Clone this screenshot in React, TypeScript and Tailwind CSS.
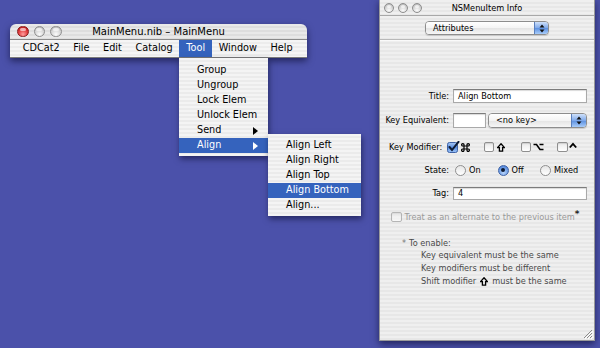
import React from "react";

function Light({ red, size }: { red?: boolean; size: "lg" | "sm" }) {
  const dim = size === "lg" ? "w-[11.5px] h-[11.5px]" : "w-[10px] h-[10px]";
  return (
    <div
      className={
        dim +
        " rounded-full relative shrink-0 " +
        (red
          ? "border border-[#8a1a1a] bg-[radial-gradient(circle_at_50%_80%,#ff9c9c_0%,#e03a3a_55%,#a81010_100%)]"
          : "border border-[#8e8e8e] bg-[radial-gradient(circle_at_50%_80%,#fbfbfb_0%,#d2d2d2_60%,#a9a9a9_100%)]")
      }
    >
      <div className="mx-auto mt-[1px] w-[60%] h-[35%] rounded-full bg-white/60" />
    </div>
  );
}

function UpDown() {
  return (
    <svg width="6" height="9" viewBox="0 0 6 9">
      <path d="M3 0.5 L5.5 3.5 L0.5 3.5 Z" fill="#111" />
      <path d="M3 8.5 L5.5 5.5 L0.5 5.5 Z" fill="#111" />
    </svg>
  );
}

function ShiftIcon() {
  return (
    <svg width="8" height="9" viewBox="0 0 8 9" className="shrink-0">
      <path
        d="M4 0.8 L7.4 4.6 L5.6 4.6 L5.6 8.2 L2.4 8.2 L2.4 4.6 L0.6 4.6 Z"
        fill="none"
        stroke="#000"
        strokeWidth="1.3"
        strokeLinejoin="miter"
      />
    </svg>
  );
}

function CtrlIcon() {
  return (
    <svg width="8" height="8" viewBox="0 0 8 8" className="shrink-0 -mt-[3px]">
      <path d="M0.8 5.5 L4 1.8 L7.2 5.5" fill="none" stroke="#000" strokeWidth="1.8" />
    </svg>
  );
}

function CmdIcon() {
  return (
    <svg width="9" height="9" viewBox="0 0 9 9" className="shrink-0">
      <path
        d="M3 3 L3 1.9 A1.2 1.2 0 1 0 1.9 3 L7.1 3 A1.2 1.2 0 1 0 6 1.9 L6 7.1 A1.2 1.2 0 1 0 7.1 6 L1.9 6 A1.2 1.2 0 1 0 3 7.1 Z"
        fill="none"
        stroke="#000"
        strokeWidth="1.2"
      />
    </svg>
  );
}

function OptIcon() {
  return (
    <svg width="11" height="8" viewBox="0 0 11 8" className="shrink-0">
      <path d="M0.5 1.5 L3.5 1.5 L7 6.5 L10.5 6.5 M6.5 1.5 L10.5 1.5" fill="none" stroke="#000" strokeWidth="1.6" />
    </svg>
  );
}

function Popup({ label, w, h, blueW }: { label: string; w: string; h: string; blueW: string }) {
  return (
    <div
      className={
        w +
        " " +
        h +
        " flex rounded-[4px] border border-[#8d8d8d] overflow-hidden shadow-[0_1px_1px_rgba(0,0,0,0.15)]"
      }
    >
      <div className="flex-1 flex items-center pl-[7px] bg-[linear-gradient(180deg,#ffffff_0%,#f4f4f4_50%,#e4e4e4_51%,#f6f6f6_100%)] text-black">
        {label}
      </div>
      <div
        className={
          blueW +
          " flex items-center justify-center border-l border-[#5a7fbd] bg-[linear-gradient(180deg,#cfe1fb_0%,#7fa9ea_50%,#5b8fe0_51%,#a9cdfa_100%)]"
        }
      >
        <UpDown />
      </div>
    </div>
  );
}

function Field({ value, w, h }: { value: string; w: string; h: string }) {
  return (
    <div
      className={
        w +
        " " +
        h +
        " bg-white border border-[#a9a9a9] border-t-[#7c7c7c] shadow-[inset_0_1px_1px_rgba(0,0,0,0.15)] flex items-center pl-[4px] text-black"
      }
    >
      {value}
    </div>
  );
}

function Box() {
  return (
    <div className="w-[10.5px] h-[10.5px] rounded-[2px] border border-[#8f8f8f] bg-[linear-gradient(180deg,#e9e9e9,#ffffff)] shadow-[inset_0_1px_1px_rgba(0,0,0,0.12)] shrink-0" />
  );
}

function CheckedBox() {
  return (
    <svg width="13" height="12" viewBox="0 0 13 12" className="shrink-0 -mt-[1px]">
      <defs>
        <linearGradient id="cbg" x1="0" y1="0" x2="0" y2="1">
          <stop offset="0" stopColor="#a9c8f5" />
          <stop offset="0.5" stopColor="#5b8fe0" />
          <stop offset="1" stopColor="#9cc4f8" />
        </linearGradient>
      </defs>
      <rect x="0.5" y="1.5" width="10" height="10" rx="2" fill="url(#cbg)" stroke="#3e62a6" />
      <path d="M2.5 6 L5 9 L11.5 0.8" fill="none" stroke="#0d1a33" strokeWidth="2" strokeLinecap="round" />
    </svg>
  );
}

function Radio({ on }: { on?: boolean }) {
  return on ? (
    <div className="w-[11px] h-[11px] rounded-full border border-[#3e62a6] bg-[radial-gradient(circle_at_50%_75%,#b6d3fb_0%,#6b9be4_60%,#3f74cf_100%)] flex items-center justify-center shrink-0">
      <div className="w-[4px] h-[4px] rounded-full bg-[#0d1a33]" />
    </div>
  ) : (
    <div className="w-[11px] h-[11px] rounded-full border border-[#8f8f8f] bg-[linear-gradient(180deg,#e6e6e6,#ffffff)] shrink-0" />
  );
}

function MenuItem({ label, active, arrow }: { label: string; active?: boolean; arrow?: boolean }) {
  return (
    <div
      className={
        "h-[15px] flex items-center justify-between pl-[18px] pr-[10px] " +
        (active ? "bg-[#3563bd] text-white" : "text-black")
      }
    >
      <span>{label}</span>
      {arrow && (
        <svg width="5" height="8" viewBox="0 0 5 8">
          <path d="M0 0 L5 4 L0 8 Z" fill={active ? "#ffffff" : "#000000"} />
        </svg>
      )}
    </div>
  );
}

export default function App() {
  return (
    <div className="relative w-[600px] h-[348px] overflow-hidden bg-[#4b51aa] font-['DejaVu_Sans',sans-serif]">
      {/* Main window */}
      <div className="absolute left-[10px] top-[24px] w-[297px] rounded-t-[6px] shadow-[0_3px_7px_rgba(0,0,30,0.55)]">
        <div className="h-[16px] rounded-t-[6px] grid grid-cols-[1fr_auto_1fr] items-center border-b border-[#8a8a8a] bg-[repeating-linear-gradient(180deg,#e9e9e9_0px,#e9e9e9_2px,#dedede_2px,#dedede_4px)]">
          <div className="flex items-center gap-[5px] pl-[7px]">
            <Light red size="lg" />
            <Light size="lg" />
            <Light size="lg" />
          </div>
          <div className="text-[10px] leading-none text-black">MainMenu.nib – MainMenu</div>
          <div />
        </div>
        <div className="h-[18px] flex items-stretch pl-[6px] text-[9.7px] text-black border-b border-[#7a7a7a] bg-[repeating-linear-gradient(180deg,#f5f5f5_0px,#f5f5f5_2px,#ececec_2px,#ececec_4px)]">
          {["CDCat2", "File", "Edit", "Catalog", "Tool", "Window", "Help"].map((m) => (
            <div
              key={m}
              className={
                "flex items-center px-[6.8px] " + (m === "Tool" ? "bg-[#3563bd] text-white" : "")
              }
            >
              {m}
            </div>
          ))}
        </div>
      </div>

      {/* Tool menu */}
      <div className="absolute left-[179px] top-[58px] w-[89px] pt-[5px] pb-[3px] text-[9.7px] bg-[repeating-linear-gradient(180deg,#f4f4f4_0px,#f4f4f4_2px,#ebebeb_2px,#ebebeb_4px)] shadow-[1px_3px_6px_rgba(0,0,30,0.5)]">
        <MenuItem label="Group" />
        <MenuItem label="Ungroup" />
        <MenuItem label="Lock Elem" />
        <MenuItem label="Unlock Elem" />
        <MenuItem label="Send" arrow />
        <MenuItem label="Align" arrow active />
      </div>

      {/* Align submenu */}
      <div className="absolute left-[268px] top-[134px] w-[93px] pt-[4px] pb-[3px] text-[9.7px] bg-[repeating-linear-gradient(180deg,#f4f4f4_0px,#f4f4f4_2px,#ebebeb_2px,#ebebeb_4px)] shadow-[1px_3px_6px_rgba(0,0,30,0.5)]">
        <MenuItem label="Align Left" />
        <MenuItem label="Align Right" />
        <MenuItem label="Align Top" />
        <MenuItem label="Align Bottom" active />
        <MenuItem label="Align..." />
      </div>

      {/* Info panel */}
      <div className="absolute left-[379px] top-[-1px] w-[216px] h-[342px] text-[8.2px] leading-none text-black border border-[#9a9a9a] bg-[repeating-linear-gradient(180deg,#efefef_0px,#efefef_2px,#e7e7e7_2px,#e7e7e7_4px)] shadow-[0_3px_7px_rgba(0,0,30,0.55)]">
        <div className="h-[16px] grid grid-cols-[1fr_auto_1fr] items-center border-b border-[#a8a8a8]">
          <div className="flex items-center gap-[4px] pl-[4px] pt-[1px]">
            <Light size="sm" />
            <Light size="sm" />
            <Light size="sm" />
          </div>
          <div className="pt-[1px]">NSMenuItem Info</div>
          <div />
        </div>
        <div className="flex justify-center pt-[5px]">
          <Popup label="Attributes" w="w-[124px]" h="h-[14px]" blueW="w-[14px]" />
        </div>
        <div className="mt-[4px] h-px bg-[#b8b8b8]" />
        <div className="h-px bg-[#fafafa]" />

        <div className="flex flex-col pt-[48px]">
          <div className="flex items-center h-[14px]">
            <div className="w-[69px] text-right">Title:</div>
            <div className="ml-[4px]">
              <Field value="Align Bottom" w="w-[134px]" h="h-[14px]" />
            </div>
          </div>

          <div className="flex items-center h-[15px] mt-[10px]">
            <div className="w-[69px] text-right">Key Equivalent:</div>
            <div className="ml-[4px] flex gap-[2px]">
              <Field value="" w="w-[33px]" h="h-[15px]" />
              <Popup label="<no key>" w="w-[99px]" h="h-[15px]" blueW="w-[15px]" />
            </div>
          </div>

          <div className="flex items-center h-[12px] mt-[13px]">
            <div className="w-[69px] text-right">Key Modifier:</div>
            <div className="ml-[5px] flex items-center">
              <div className="w-[36.7px] flex items-center gap-[1px]">
                <CheckedBox />
                <CmdIcon />
              </div>
              <div className="w-[36.7px] flex items-center gap-[3px]">
                <Box />
                <ShiftIcon />
              </div>
              <div className="w-[36.7px] flex items-center gap-[2px]">
                <Box />
                <OptIcon />
              </div>
              <div className="w-[36.7px] flex items-center gap-[1px]">
                <Box />
                <CtrlIcon />
              </div>
            </div>
          </div>

          <div className="flex items-center h-[12px] mt-[11px]">
            <div className="w-[69px] text-right">State:</div>
            <div className="ml-[6px] flex items-center">
              <div className="w-[42.5px] flex items-center gap-[3px]">
                <Radio />
                <span>On</span>
              </div>
              <div className="w-[42.5px] flex items-center gap-[3px]">
                <Radio on />
                <span>Off</span>
              </div>
              <div className="flex items-center gap-[3px]">
                <Radio />
                <span>Mixed</span>
              </div>
            </div>
          </div>

          <div className="flex items-center h-[13px] mt-[11px]">
            <div className="w-[69px] text-right">Tag:</div>
            <div className="ml-[4px]">
              <Field value="4" w="w-[134px]" h="h-[13px]" />
            </div>
          </div>

          <div className="flex items-center h-[12px] mt-[11px] pl-[11px]">
            <div className="opacity-60 mr-[3px]">
              <Box />
            </div>
            <span className="text-[#9a9a9a]">Treat as an alternate to the previous item</span>
            <span className="-mt-[5px] font-bold text-[9px] text-[#222]">*</span>
          </div>

          <div className="flex items-center h-[12px] mt-[14px] pl-[22px] text-[#4a4a4a]">
            <span className="text-[#777] mr-[3px]">*</span>
            <span>To enable:</span>
          </div>
          <div className="flex flex-col pl-[41px] text-[#4a4a4a]">
            <div className="h-[13px] flex items-center">Key equivalent must be the same</div>
            <div className="h-[13px] flex items-center">Key modifiers must be different</div>
            <div className="h-[13px] flex items-center">
              <span>Shift modifier</span>
              <span className="mx-[4px]">
                <ShiftIcon />
              </span>
              <span>must be the same</span>
            </div>
          </div>
        </div>

        <svg
          width="10"
          height="10"
          viewBox="0 0 10 10"
          className="absolute right-[1px] bottom-[1px]"
        >
          <path d="M9 1 L1 9 M9 4 L4 9 M9 7 L7 9" stroke="#8a8a8a" strokeWidth="1" />
          <path d="M10 2 L2 10 M10 5 L5 10 M10 8 L8 10" stroke="#ffffff" strokeWidth="1" />
        </svg>
      </div>
    </div>
  );
}
